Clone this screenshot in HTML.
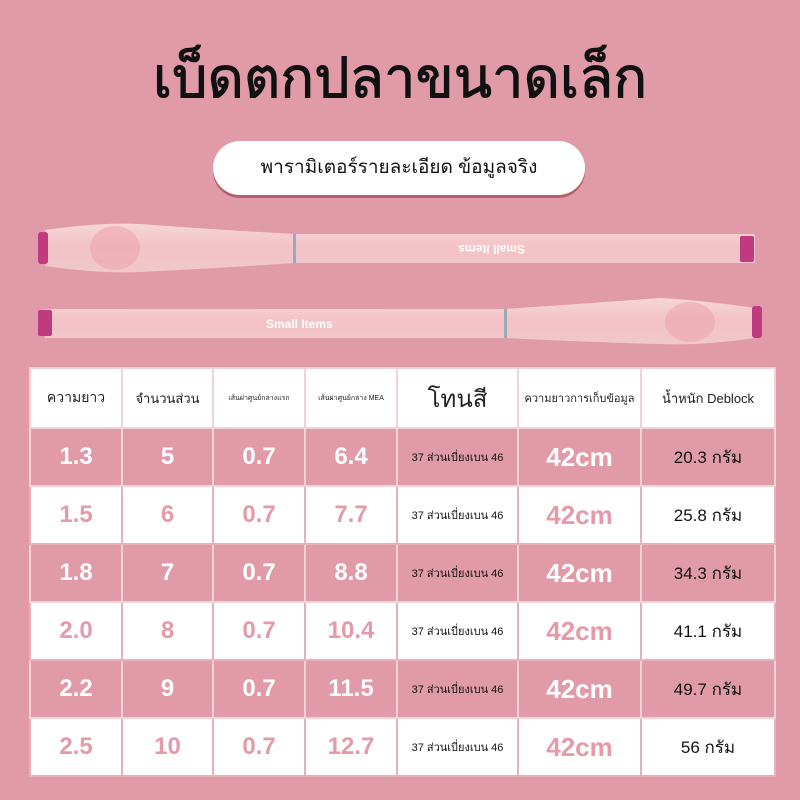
<!DOCTYPE html>
<html><head><meta charset="utf-8"><style>
html,body{margin:0;padding:0}
body{width:800px;height:800px;overflow:hidden;background:#e09aa8;font-family:"Liberation Sans","DejaVu Sans",sans-serif;position:relative}
.title{position:absolute;left:0;width:800px;top:38px;text-align:center;font-size:56px;color:#111;line-height:80px;-webkit-text-stroke:1px #111}
.pill{position:absolute;left:213px;top:141px;width:372px;height:54px;background:#fff;border-radius:27px;box-shadow:0 3px 0 #b56070;text-align:center;line-height:54px;font-size:19px;color:#111}
table{position:absolute;left:29px;top:367px;width:745px;border-collapse:collapse;table-layout:fixed}
td{border:2px solid #f1d2d8;text-align:center;padding:0;height:56px}
tr.h td{height:58px;background:#fff;color:#222;font-size:13px}
tr.p td{background:#e09aa8;color:#fff;font-size:24px;font-weight:bold}
tr.w td{background:#fff;color:#e59aaa;font-size:24px;font-weight:bold;border-color:#e7b0bb}
td.s{font-size:11px!important;font-weight:normal!important;color:#111!important}
td.g{font-size:17px!important;font-weight:normal!important;color:#111!important}
td.c{font-size:26px!important}
</style></head><body>
<div class="title">เบ็ดตกปลาขนาดเล็ก</div>
<div class="pill">พารามิเตอร์รายละเอียด ข้อมูลจริง</div>
<svg style="position:absolute;left:0;top:200px" width="800" height="160">
<defs><linearGradient id="r" x1="0" y1="0" x2="0" y2="1"><stop offset="0" stop-color="#f6d6d8"/><stop offset=".5" stop-color="#f3c2c6"/><stop offset="1" stop-color="#f0c8cc"/></linearGradient></defs>
<path d="M45 30 Q100 22 140 24 Q220 30 295 34 L755 34 L755 63 L295 63 Q220 68 140 72 Q100 74 45 66 Z" fill="url(#r)"/>
<ellipse cx="115" cy="48" rx="25" ry="22" fill="#eaa0a8" opacity=".5"/>
<rect x="293" y="34" width="3" height="29" fill="#9ab"/>
<rect x="38" y="32" width="10" height="32" rx="3" fill="#c03a80"/>
<rect x="740" y="36" width="14" height="26" rx="2" fill="#c03a80"/>
<text x="455" y="53" font-size="12" font-weight="bold" fill="#fff" transform="rotate(180 490 49)">Small Items</text>
<path d="M755 108 Q700 100 660 98 Q580 104 505 109 L45 109 L45 138 L505 138 Q580 142 660 144 Q700 146 755 138 Z" fill="url(#r)"/>
<ellipse cx="690" cy="122" rx="25" ry="20" fill="#eaa0a8" opacity=".5"/>
<rect x="504" y="109" width="3" height="29" fill="#9ab"/>
<rect x="38" y="110" width="14" height="26" rx="2" fill="#c03a80"/>
<rect x="752" y="106" width="10" height="32" rx="3" fill="#c03a80"/>
<text x="266" y="128" font-size="12" font-weight="bold" fill="#fff">Small Items</text>
</svg>
<table>
<colgroup><col style="width:92px"><col style="width:91px"><col style="width:92px"><col style="width:92px"><col style="width:121px"><col style="width:123px"><col style="width:134px"></colgroup>
<tr class="h"><td style="font-size:14px">ความยาว</td><td>จำนวนส่วน</td><td style="font-size:7px">เส้นผ่าศูนย์กลางแรก</td><td style="font-size:7px">เส้นผ่าศูนย์กลาง MEA</td><td style="font-size:24px">โทนสี</td><td style="font-size:11px">ความยาวการเก็บข้อมูล</td><td style="font-size:13px">น้ำหนัก Deblock</td></tr>
<tr class="p"><td>1.3</td><td>5</td><td>0.7</td><td>6.4</td><td class="s">37 ส่วนเบี่ยงเบน 46</td><td class="c">42cm</td><td class="g">20.3 กรัม</td></tr>
<tr class="w"><td>1.5</td><td>6</td><td>0.7</td><td>7.7</td><td class="s">37 ส่วนเบี่ยงเบน 46</td><td class="c">42cm</td><td class="g">25.8 กรัม</td></tr>
<tr class="p"><td>1.8</td><td>7</td><td>0.7</td><td>8.8</td><td class="s">37 ส่วนเบี่ยงเบน 46</td><td class="c">42cm</td><td class="g">34.3 กรัม</td></tr>
<tr class="w"><td>2.0</td><td>8</td><td>0.7</td><td>10.4</td><td class="s">37 ส่วนเบี่ยงเบน 46</td><td class="c">42cm</td><td class="g">41.1 กรัม</td></tr>
<tr class="p"><td>2.2</td><td>9</td><td>0.7</td><td>11.5</td><td class="s">37 ส่วนเบี่ยงเบน 46</td><td class="c">42cm</td><td class="g">49.7 กรัม</td></tr>
<tr class="w"><td>2.5</td><td>10</td><td>0.7</td><td>12.7</td><td class="s">37 ส่วนเบี่ยงเบน 46</td><td class="c">42cm</td><td class="g">56 กรัม</td></tr>
</table>
</body></html>
